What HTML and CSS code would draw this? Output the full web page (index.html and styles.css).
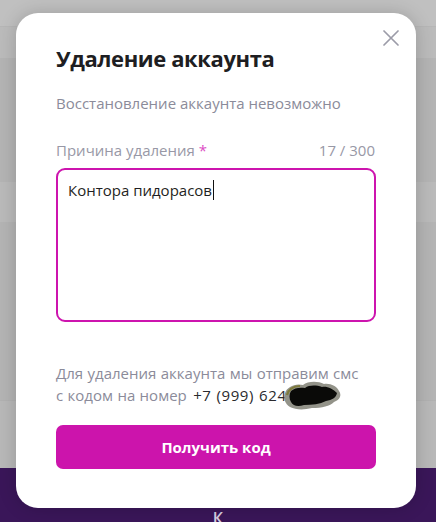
FILE: index.html
```html
<!DOCTYPE html>
<html lang="ru">
<head>
<meta charset="utf-8">
<title>Удаление аккаунта</title>
<link rel="stylesheet" href="styles.css">
</head>
<body>
<div class="page">
  <div class="band band-top"></div>
  <div class="band band-2"></div>
  <div class="band band-3"></div>
  <div class="band band-4"></div>
  <div class="band band-5"></div>
  <div class="band band-6"></div>
  <div class="band band-footer"><span class="footer-text">К</span></div>
</div>

<div class="modal">
  <button class="close" aria-label="Закрыть">
    <svg width="16" height="16" viewBox="0 0 16 16"><path d="M1 1L15 15M15 1L1 15" stroke="#9c9ca8" stroke-width="1.7" stroke-linecap="round" fill="none"/></svg>
  </button>
  <h1 class="title">Удаление аккаунта</h1>
  <p class="subtitle">Восстановление аккаунта невозможно</p>
  <div class="label-row">
    <span class="label">Причина удаления <span class="req">*</span></span>
    <span class="counter">17 / 300</span>
  </div>
  <div class="textarea"><span>Контора пидорасов</span><span class="caret"></span></div>
  <p class="sms">Для удаления аккаунта мы отправим смс<br>с кодом на номер <span class="phone">+7 (999) 624</span>
    <svg class="scribble" width="60" height="32" viewBox="0 0 60 32">
      <path d="M3 13C5 7 13 3 21 5C26 1 36 1 42 4C48 3 55 6 57 11C60 15 58 20 52 22C48 26 40 28 30 28C22 30 14 30 8 27C3 24 1 18 3 13Z" fill="#939389"/>
      <path d="M9 11C12 8 18 7 23 8C27 5 34 5 40 7C45 6 51 9 55 13C54 18 50 20 44 21C38 24 30 25 22 25C16 27 11 26 9 22C7 19 7 14 9 11Z" fill="#0a0a08"/>
      <path d="M5 15C6 10 11 6 18 6" stroke="#7f7b3c" stroke-width="2.2" fill="none"/>
    </svg>
  </p>
  <button class="btn">Получить код</button>
</div>
</body>
</html>
```
FILE: styles.css
```css
* { box-sizing: border-box; }
html, body {
  margin: 0;
  padding: 0;
  width: 436px;
  height: 522px;
  overflow: hidden;
  font-family: "Open Sans", "Noto Sans", sans-serif;
}
.page {
  display: flex;
  flex-direction: column;
  height: 522px;
}
.band { flex: none; }
.band-top { height: 26px; background: #c0c0c0; }
.band-2 { height: 32px; background: #bbbbbb; border-top: 1px solid #b6b6b6; }
.band-3 { height: 124px; background: #b4b4b4; }
.band-4 { height: 40px; background: #bababa; }
.band-5 { height: 178px; background: #b4b4b4; }
.band-6 { height: 68px; background: #b8b8b8; border-top: 1px solid #b1b1b1; }
.band-footer {
  flex: 1;
  background: #3a1659;
  display: flex;
  justify-content: center;
  padding-top: 40px;
}
.footer-text {
  color: #d8cde0;
  font-size: 16px;
  font-weight: 600;
  line-height: 20px;
}

.modal {
  position: absolute;
  left: 16px;
  top: 13px;
  width: 400px;
  height: 495px;
  background: #fff;
  border-radius: 22px;
  box-shadow: 0 0 18px rgba(0, 0, 0, 0.18);
  padding: 30px 40px 39px;
  display: flex;
  flex-direction: column;
}
.close {
  position: absolute;
  top: 17px;
  right: 17px;
  width: 16px;
  height: 16px;
  padding: 0;
  border: 0;
  background: none;
  display: flex;
}
.title {
  margin: 0;
  font-size: 22px;
  line-height: 30px;
  font-weight: 700;
  color: #1e1e22;
  letter-spacing: -0.4px;
}
.subtitle {
  margin: 20px 0 0;
  font-size: 15px;
  line-height: 20px;
  color: #8b8b9a;
}
.label-row {
  margin-top: 27px;
  display: flex;
  justify-content: space-between;
  font-size: 15px;
  line-height: 20px;
  color: #9898a6;
}
.req { color: #dc4cc4; font-weight: 400; }
.counter { color: #9898a6; padding-right: 1px; }
.textarea {
  margin-top: 8px;
  height: 154px;
  border: 2px solid #cd14ae;
  border-radius: 9px;
  padding: 9px 10px;
  font-size: 15px;
  line-height: 22px;
  color: #1f1f22;
  display: flex;
  align-items: flex-start;
}
.caret {
  display: inline-block;
  width: 1px;
  height: 20px;
  margin-top: 1px;
  margin-left: 1px;
  background: #111;
}
.sms {
  position: relative;
  margin: 40px 0 0;
  font-size: 15px;
  line-height: 22px;
  color: #8b8b9a;
  word-spacing: 0.5px;
}
.phone { color: #2a2a2e; letter-spacing: 0.6px; margin-left: 2px; }
.scribble {
  position: absolute;
  left: 226px;
  top: 18px;
}
.btn {
  margin-top: 19px;
  height: 44px;
  border: 0;
  border-radius: 7px;
  background: #cc14ac;
  color: #fff;
  font-family: inherit;
  font-size: 15px;
  font-weight: 700;
}
```
